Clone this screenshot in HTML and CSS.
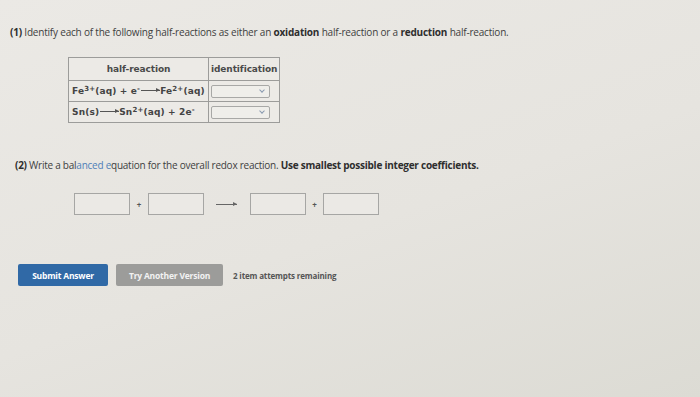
FILE: index.html
```html
<!DOCTYPE html>
<html>
<head>
<meta charset="utf-8">
<link rel="stylesheet" href="styles.css">
</head>
<body>
<div class="page">
  <p class="q q1"><b>(1)</b> Identify each of the following half-reactions as either an <b>oxidation</b> half-reaction or a <b>reduction</b> half-reaction.</p>

  <table class="rx">
    <tr><th class="c1">half-reaction</th><th class="c2">identification</th></tr>
    <tr><td class="c1">Fe<sup>3+</sup>(aq) + e<sup>-</sup><span class="arr"></span>Fe<sup>2+</sup>(aq)</td><td class="c2"><span class="sel"><span class="chev"></span></span></td></tr>
    <tr><td class="c1">Sn(s)<span class="arr"></span>Sn<sup>2+</sup>(aq) + 2e<sup>-</sup></td><td class="c2"><span class="sel"><span class="chev"></span></span></td></tr>
  </table>

  <p class="q q2"><b>(2)</b> Write a bal<span class="hl">anced e</span>quation for the overall redox reaction. <b>Use smallest possible integer coefficients.</b></p>

  <div class="eq">
    <span class="box"></span><span class="plus">+</span><span class="box"></span>
    <span class="longarr"></span>
    <span class="box"></span><span class="plus">+</span><span class="box"></span>
  </div>

  <div class="actions">
    <span class="btn submit">Submit Answer</span>
    <span class="btn another">Try Another Version</span>
    <span class="remain">2 item attempts remaining</span>
  </div>
</div>
</body>
</html>
```

FILE: styles.css
```css
html, body {
  margin: 0;
  padding: 0;
  height: 100%;
}
body {
  background: linear-gradient(160deg, #ebe9e5 0%, #e6e4df 55%, #dcdbd4 100%);
  font-family: "Open Sans", "Liberation Sans", sans-serif;
  color: #3e3e3e;
}
.page {
  padding: 25px 0 0 10px;
}
.q {
  margin: 0;
  font-size: 10px;
  line-height: 14px;
  letter-spacing: -0.2px;
  white-space: nowrap;
}
.q b { color: #2e2e2e; }
.rx {
  border-collapse: collapse;
  margin: 18px 0 0 58px;
  font-family: "DejaVu Sans", Verdana, sans-serif;
  font-weight: bold;
  font-size: 9px;
  color: #444;
  background: #eceae6;
}
.rx th, .rx td {
  border: 1px solid #9c9c9a;
  padding: 0 3px;
  height: 20px;
  white-space: nowrap;
}
.rx th { height: 22px; font-weight: bold; color: #4a4a4a; letter-spacing: -0.1px; }
.rx td.c1 { letter-spacing: 0.15px; }
.rx th.c1 { width: 133px; text-align: center; }
.rx td.c1 { text-align: left; }
.rx th.c2 { text-align: center; padding: 0 2px; }
.rx td.c2 { padding: 0 2px; }
.rx sup { font-size: 7px; vertical-align: 3px; line-height: 0; }
.arr {
  display: inline-block;
  width: 19px;
  height: 1px;
  background: #555;
  vertical-align: 3px;
  position: relative;
  margin: 0 0 0 1px;
}
.arr::after {
  content: "";
  position: absolute;
  right: 0;
  top: -2px;
  border-left: 4px solid #555;
  border-top: 2.5px solid transparent;
  border-bottom: 2.5px solid transparent;
}
.sel {
  display: block;
  width: 57px;
  height: 11px;
  border: 1px solid #a8a8a6;
  border-radius: 2px;
  background: #efeeea;
  position: relative;
}
.chev {
  position: absolute;
  right: 5px;
  top: 2px;
  width: 3px;
  height: 3px;
  border-right: 1px solid #8a9ab0;
  border-bottom: 1px solid #8a9ab0;
  transform: rotate(45deg);
}
.q2 {
  margin-top: 35px;
  padding-left: 5px;
  letter-spacing: -0.25px;
}
.hl { color: #4f7fb8; }
.eq {
  display: flex;
  align-items: center;
  margin: 21px 0 0 64px;
  height: 22px;
}
.box {
  width: 54px;
  height: 20px;
  border: 1px solid #a6a6a4;
  background: #ebe9e5;
}
.plus {
  width: 18px;
  text-align: center;
  font-size: 8px;
  font-weight: bold;
  color: #555;
}
.longarr {
  width: 21px;
  height: 1px;
  background: #666;
  margin: 0 13px 0 12px;
  position: relative;
}
.longarr::after {
  content: "";
  position: absolute;
  right: 0;
  top: -2px;
  border-left: 4px solid #666;
  border-top: 2.5px solid transparent;
  border-bottom: 2.5px solid transparent;
}
.box + .plus + .box + .longarr + .box + .plus { width: 17px; }
.actions {
  display: flex;
  align-items: center;
  margin: 49px 0 0 8px;
}
.btn {
  display: flex;
  align-items: center;
  justify-content: center;
  height: 22px;
  border-radius: 2px;
  color: #fff;
  font-size: 8.5px;
  font-weight: bold;
  letter-spacing: -0.2px;
}
.submit {
  width: 90px;
  background: #3069a6;
}
.another {
  width: 107px;
  margin-left: 8px;
  background: #9c9c9a;
  color: #f2f2f2;
}
.remain {
  margin-left: 10px;
  font-size: 8px;
  font-weight: bold;
  color: #555;
  letter-spacing: -0.15px;
}
```
